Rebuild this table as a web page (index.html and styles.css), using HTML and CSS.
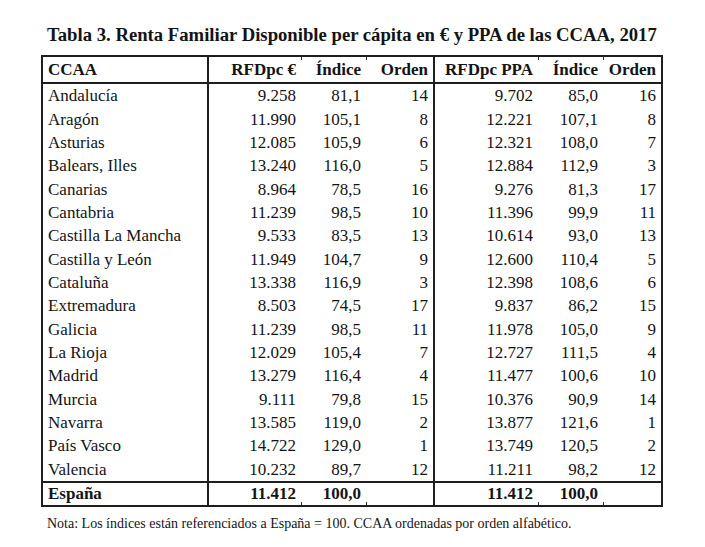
FILE: index.html
```html
<!DOCTYPE html>
<html lang="es">
<head>
<meta charset="utf-8">
<title>Tabla 3</title>
<link rel="stylesheet" href="styles.css">
</head>
<body>
<div class="page">
  <h1 class="title">Tabla 3. Renta Familiar Disponible per cápita en € y PPA de las CCAA, 2017</h1>
  <table class="data">
    <colgroup>
      <col class="c1"><col class="c2"><col class="c3"><col class="c4"><col class="c5"><col class="c6"><col class="c7">
    </colgroup>
    <thead>
      <tr>
        <th class="name">CCAA</th>
        <th>RFDpc €</th>
        <th class="tick">Índice</th>
        <th class="sep tick">Orden</th>
        <th>RFDpc PPA</th>
        <th class="tick">Índice</th>
        <th class="tick">Orden</th>
      </tr>
    </thead>
    <tbody>
      <tr><td class="name">Andalucía</td><td>9.258</td><td>81,1</td><td class="sep">14</td><td>9.702</td><td>85,0</td><td>16</td></tr>
      <tr><td class="name">Aragón</td><td>11.990</td><td>105,1</td><td class="sep">8</td><td>12.221</td><td>107,1</td><td>8</td></tr>
      <tr><td class="name">Asturias</td><td>12.085</td><td>105,9</td><td class="sep">6</td><td>12.321</td><td>108,0</td><td>7</td></tr>
      <tr><td class="name">Balears, Illes</td><td>13.240</td><td>116,0</td><td class="sep">5</td><td>12.884</td><td>112,9</td><td>3</td></tr>
      <tr><td class="name">Canarias</td><td>8.964</td><td>78,5</td><td class="sep">16</td><td>9.276</td><td>81,3</td><td>17</td></tr>
      <tr><td class="name">Cantabria</td><td>11.239</td><td>98,5</td><td class="sep">10</td><td>11.396</td><td>99,9</td><td>11</td></tr>
      <tr><td class="name">Castilla La Mancha</td><td>9.533</td><td>83,5</td><td class="sep">13</td><td>10.614</td><td>93,0</td><td>13</td></tr>
      <tr><td class="name">Castilla y León</td><td>11.949</td><td>104,7</td><td class="sep">9</td><td>12.600</td><td>110,4</td><td>5</td></tr>
      <tr><td class="name">Cataluña</td><td>13.338</td><td>116,9</td><td class="sep">3</td><td>12.398</td><td>108,6</td><td>6</td></tr>
      <tr><td class="name">Extremadura</td><td>8.503</td><td>74,5</td><td class="sep">17</td><td>9.837</td><td>86,2</td><td>15</td></tr>
      <tr><td class="name">Galicia</td><td>11.239</td><td>98,5</td><td class="sep">11</td><td>11.978</td><td>105,0</td><td>9</td></tr>
      <tr><td class="name">La Rioja</td><td>12.029</td><td>105,4</td><td class="sep">7</td><td>12.727</td><td>111,5</td><td>4</td></tr>
      <tr><td class="name">Madrid</td><td>13.279</td><td>116,4</td><td class="sep">4</td><td>11.477</td><td>100,6</td><td>10</td></tr>
      <tr><td class="name">Murcia</td><td>9.111</td><td>79,8</td><td class="sep">15</td><td>10.376</td><td>90,9</td><td>14</td></tr>
      <tr><td class="name">Navarra</td><td>13.585</td><td>119,0</td><td class="sep">2</td><td>13.877</td><td>121,6</td><td>1</td></tr>
      <tr><td class="name">País Vasco</td><td>14.722</td><td>129,0</td><td class="sep">1</td><td>13.749</td><td>120,5</td><td>2</td></tr>
      <tr><td class="name">Valencia</td><td>10.232</td><td>89,7</td><td class="sep">12</td><td>11.211</td><td>98,2</td><td>12</td></tr>
    </tbody>
    <tfoot>
      <tr><td class="name">España</td><td>11.412</td><td class="tick">100,0</td><td class="sep tick"></td><td>11.412</td><td class="tick">100,0</td><td class="tick"></td></tr>
    </tfoot>
  </table>
  <p class="note">Nota: Los índices están referenciados a España = 100. CCAA ordenadas por orden alfabético.</p>
</div>
</body>
</html>
```
FILE: styles.css
```css
html, body {
  margin: 0;
  padding: 0;
  background: #ffffff;
}
body {
  font-family: "Liberation Serif", "Times New Roman", serif;
  color: #141414;
}
.page {
  width: 705px;
  height: 547px;
  padding: 24px 0 0 41px;
  box-sizing: border-box;
}
.title {
  margin: 0 0 10px 6px;
  font-size: 18.7px;
  font-weight: bold;
  line-height: 21px;
  white-space: nowrap;
}
.data {
  border-collapse: collapse;
  table-layout: fixed;
  width: 620px;
  border: 2px solid #1e1e1e;
  font-size: 17px;
}
.c1 { width: 166px; }
.c2 { width: 93px; }
.c3 { width: 65px; }
.c4 { width: 68px; }
.c5 { width: 104px; }
.c6 { width: 65px; }
.c7 { width: 59px; }
.data th, .data td {
  padding: 0 5px 0 0;
  text-align: right;
  white-space: nowrap;
  line-height: 19px;
}
.data th {
  height: 25px;
  font-weight: bold;
  border-bottom: 2px solid #1e1e1e;
}
.data tbody td {
  height: 23.35px;
}
.data .name {
  text-align: left;
  padding-left: 5px;
  border-right: 2px solid #1e1e1e;
}
.data .sep {
  border-right: 2px solid #1e1e1e;
}
.data tfoot td {
  height: 22px;
  font-weight: bold;
  border-top: 2px solid #1e1e1e;
}
/* small grid ticks left over from the spreadsheet cell borders */
.data .tick {
  position: relative;
}
.data th.tick::before,
.data tfoot td.tick::before {
  content: "";
  position: absolute;
  left: 0;
  width: 1px;
  height: 3px;
  background: #333;
}
.data th.tick::before {
  top: 0;
}
.data tfoot td.tick::before {
  bottom: 0;
}
.note {
  margin: 9px 0 0 6px;
  font-size: 14px;
  line-height: 16px;
  white-space: nowrap;
}
```
